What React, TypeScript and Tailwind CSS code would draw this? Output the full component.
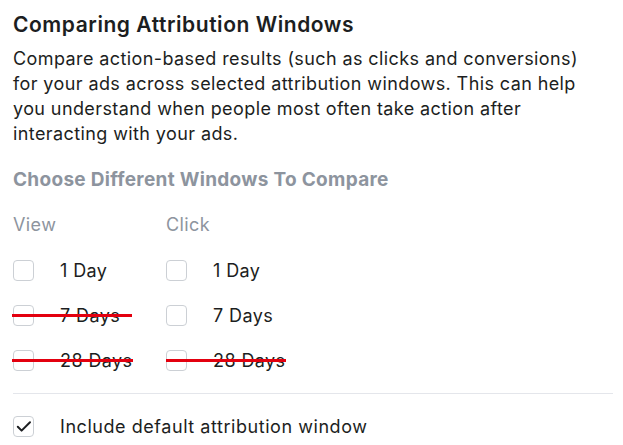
import React from "react"

type Opt = { label: string; struck?: boolean; lineW?: number; lineL?: number }

const view: Opt[] = [
  { label: "1 Day" },
  { label: "7 Days", struck: true, lineW: 120, lineL: -1 },
  { label: "28 Days", struck: true, lineW: 121, lineL: -1 },
]

const click: Opt[] = [
  { label: "1 Day" },
  { label: "7 Days" },
  { label: "28 Days", struck: true, lineW: 120, lineL: 0 },
]

function Box({ checked }: { checked?: boolean }) {
  return (
    <span className="flex h-[21px] w-[21px] shrink-0 items-center justify-center rounded-[4px] border border-[#ccd0d5] bg-white">
      {checked && (
        <svg width="16" height="13" viewBox="0 0 16 13" fill="none">
          <path d="M1.8 6.8 5.6 10.6 14 2.2" stroke="#1c1e21" strokeWidth="2" strokeLinecap="round" strokeLinejoin="round" />
        </svg>
      )}
    </span>
  )
}

function Row({ opt }: { opt: Opt }) {
  return (
    <div className="relative flex h-[45px] items-center gap-[26px]">
      <Box />
      <span className="text-[18px] tracking-[0.4px] text-[#1c1e21]">{opt.label}</span>
      {opt.struck && (
        <span
          className="absolute top-[21px] h-[3px] bg-[#e3000f]"
          style={{ width: opt.lineW, left: opt.lineL }}
        />
      )}
    </div>
  )
}

function Column({ title, items }: { title: string; items: Opt[] }) {
  return (
    <div className="w-[153px]">
      <div className="mb-[11px] text-[18px] leading-[24px] tracking-[0.4px] text-[#8d949e]">{title}</div>
      {items.map((o) => (
        <Row key={o.label} opt={o} />
      ))}
    </div>
  )
}

export default function App() {
  return (
    <div
      className="h-[445px] w-[623px] overflow-hidden bg-white pl-[13px] pt-[12px] text-[#1c1e21]"
      style={{ fontFamily: "Inter, 'Liberation Sans', Arial, sans-serif" }}
    >
      <h2 className="text-[21px] font-semibold leading-[26px] tracking-[0.55px]">
        Comparing Attribution Windows
      </h2>
      <p className="mt-[8px] text-[18px] leading-[25px] tracking-[0.4px]">
        Compare action-based results (such as clicks and conversions)
        <br />
        for your ads across selected attribution windows. This can help
        <br />
        you understand when people most often take action after
        <br />
        interacting with your ads.
      </p>
      <h3 className="mt-[22px] text-[19px] font-bold leading-[24px] tracking-[0.3px] text-[#8d949e]">
        Choose Different Windows To Compare
      </h3>
      <div className="mt-[21px] flex">
        <Column title="View" items={view} />
        <Column title="Click" items={click} />
      </div>
      <div className="mr-[10px] mt-[10px] border-t border-[#e4e6eb]" />
      <div className="mt-[19px] flex items-center gap-[26px]">
        <Box checked />
        <span className="text-[18px] tracking-[0.55px]">Include default attribution window</span>
      </div>
    </div>
  )
}
